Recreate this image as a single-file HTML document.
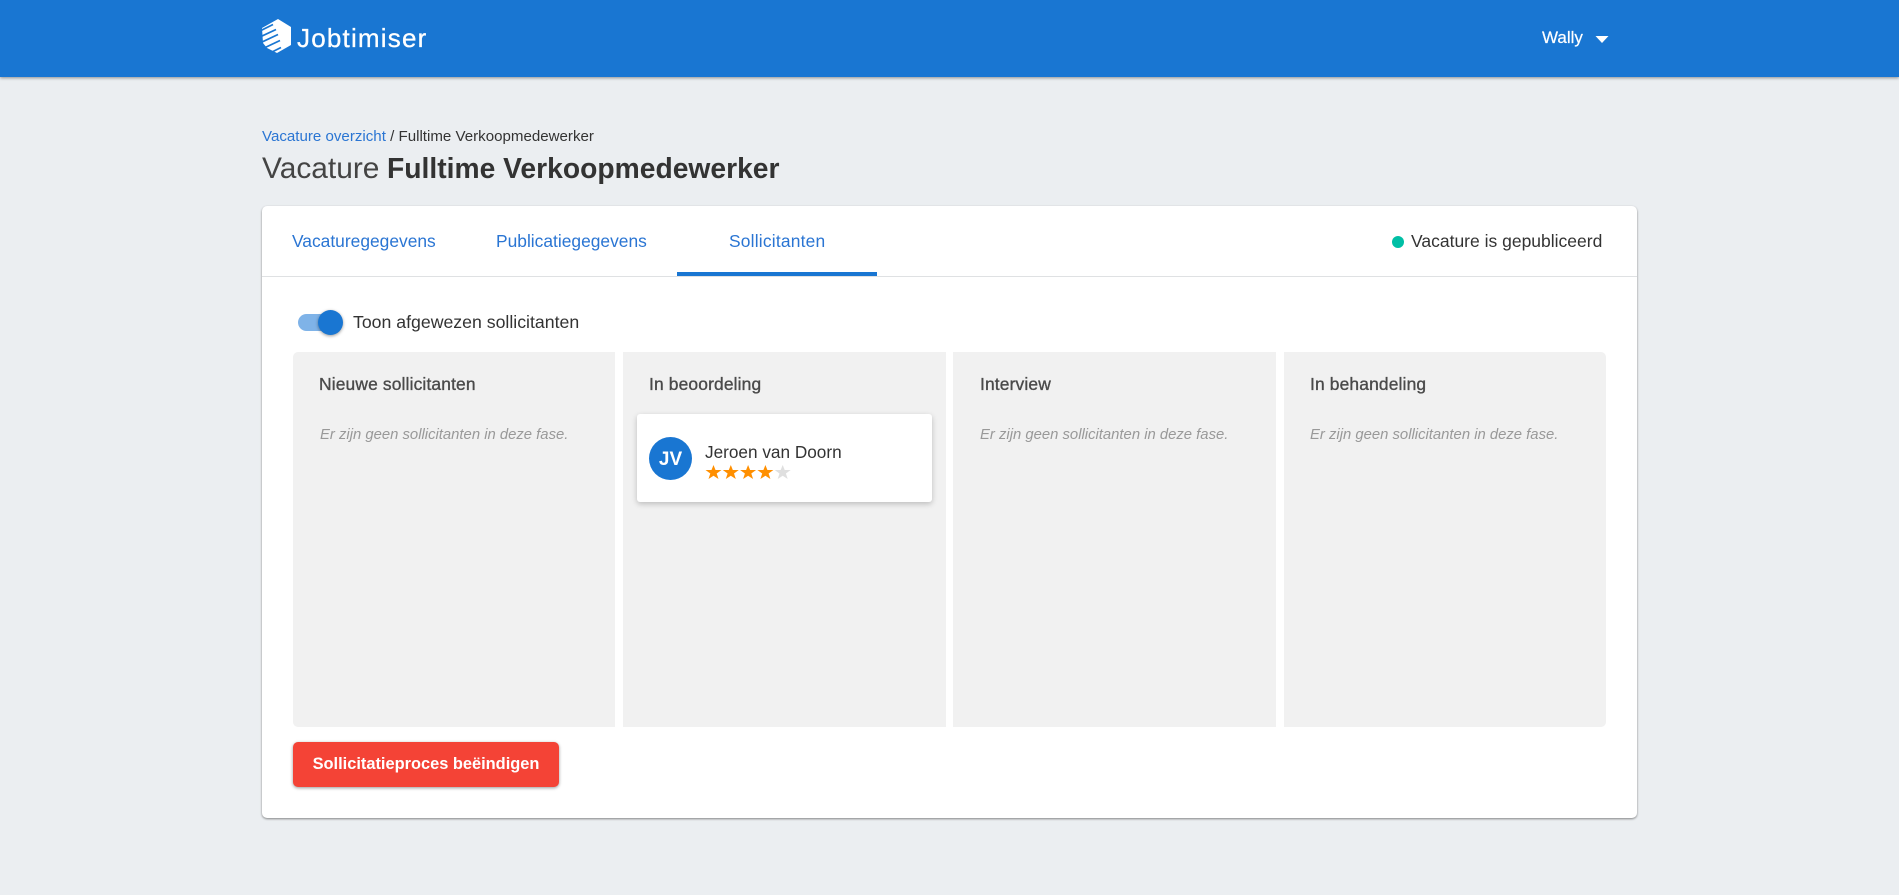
<!DOCTYPE html>
<html lang="nl">
<head>
<meta charset="utf-8">
<title>Jobtimiser</title>
<style>
html,body{margin:0;padding:0;width:1899px;height:895px;overflow:hidden;background:#ebeef1;font-family:"Liberation Sans",Arial,sans-serif;color:#333;}
.a{position:absolute;white-space:nowrap;}
#hdr{position:absolute;left:0;top:0;width:1899px;height:77px;background:#1976d2;box-shadow:0 1px 3px rgba(0,0,0,.4);}
#card{position:absolute;left:262px;top:206px;width:1375px;height:612px;background:#fff;border-radius:5px;box-shadow:0 1px 2px rgba(0,0,0,.45);}
.col{position:absolute;top:352px;height:375px;background:#f1f1f1;}
.h{font-size:17.4px;letter-spacing:.15px;font-weight:normal;color:#4a4a4a;-webkit-text-stroke:.35px #4a4a4a;top:374px;line-height:20px;}
.e{font-size:14.85px;font-style:italic;color:#999;top:425px;line-height:20px;}
.tab{font-size:17.4px;color:#2a75d3;top:231px;line-height:20px;}
</style>
</head>
<body>
<div id="hdr"></div>
<svg class="a" style="left:260px;top:17px" width="34" height="38" viewBox="0 0 34 38">
<path fill="#fff" d="M18 2L31 10V28L17 36L7 31L3 26L2 11Z"/>
<path stroke="#1976d2" stroke-width="1.7" fill="none" d="M0 14L13 7.5M0 20L16 12.5M0 26L18 17.5M2 32L20 23.5M8 37L21 30.5"/>
</svg>
<div class="a" style="left:297px;top:23px;font-size:26px;line-height:30px;color:#fff;letter-spacing:1.2px;-webkit-text-stroke:.3px #fff" id="logo">Jobtimiser</div>
<div class="a" style="left:1542px;top:28px;font-size:17px;line-height:20px;color:#fff;-webkit-text-stroke:.2px #fff">Wally</div>
<svg class="a" style="left:1595px;top:36px" width="14" height="7" viewBox="0 0 14 7"><path fill="#fff" d="M0.5 0H13.5L7 7Z"/></svg>

<div class="a" style="left:262px;top:127px;font-size:15.1px;line-height:20px;color:#333"><span style="color:#2a75d3">Vacature overzicht</span> / Fulltime Verkoopmedewerker</div>
<div class="a" style="left:262px;top:150px;font-size:29.9px;line-height:38px;color:#444">Vacature</div>
<div class="a" style="left:387px;top:149px;font-size:28.25px;line-height:38px;color:#333;font-weight:bold">Fulltime Verkoopmedewerker</div>

<div id="card"></div>
<div class="a" style="left:262px;top:276px;width:1375px;height:1px;background:#dfe1e3"></div>
<div class="a tab" style="left:292px">Vacaturegegevens</div>
<div class="a tab" style="left:496px">Publicatiegegevens</div>
<div class="a tab" style="left:729px;letter-spacing:.2px">Sollicitanten</div>
<div class="a" style="left:677px;top:272px;width:200px;height:4px;background:#1976d2"></div>
<div class="a" style="left:1392px;top:236px;width:12px;height:12px;border-radius:50%;background:#00bfa5"></div>
<div class="a" style="left:1411px;top:231px;font-size:17.5px;line-height:20px;color:#333">Vacature is gepubliceerd</div>

<div class="a" style="left:298px;top:314px;width:34px;height:17px;border-radius:9px;background:#7fb3e8"></div>
<div class="a" style="left:318px;top:310px;width:25px;height:25px;border-radius:50%;background:#1976d2;box-shadow:0 1px 3px rgba(0,0,0,.4)"></div>
<div class="a" style="left:353px;top:312px;font-size:17.7px;line-height:20px;color:#333">Toon afgewezen sollicitanten</div>

<div class="col" style="left:293px;width:322px;border-radius:5px 0 0 5px"></div>
<div class="col" style="left:623px;width:323px"></div>
<div class="col" style="left:953px;width:323px"></div>
<div class="col" style="left:1284px;width:322px;border-radius:0 5px 5px 0"></div>

<div class="a h" style="left:319px">Nieuwe sollicitanten</div>
<div class="a h" style="left:649px">In beoordeling</div>
<div class="a h" style="left:980px">Interview</div>
<div class="a h" style="left:1310px">In behandeling</div>
<div class="a e" style="left:320px">Er zijn geen sollicitanten in deze fase.</div>
<div class="a e" style="left:980px">Er zijn geen sollicitanten in deze fase.</div>
<div class="a e" style="left:1310px">Er zijn geen sollicitanten in deze fase.</div>

<div class="a" style="left:637px;top:414px;width:295px;height:88px;background:#fff;border-radius:3px;box-shadow:0 2px 6px rgba(0,0,0,.22)"></div>
<div class="a" style="left:649px;top:437px;width:43px;height:43px;border-radius:50%;background:#1976d2;color:#fff;font-size:19px;font-weight:bold;line-height:45px;text-align:center">JV</div>
<div class="a" style="left:705px;top:442px;font-size:17.2px;line-height:20px;color:#333">Jeroen van Doorn</div>
<svg class="a" style="left:705px;top:464px" width="88" height="18" viewBox="0 0 88 18">
<path fill="#ff8f00" d="M8 0L10 5H16L11.2 8.5L13 14L8 10.7L3 14L4.8 8.5L0 5H6Z" transform="translate(.5,1)"/>
<path fill="#ff8f00" d="M8 0L10 5H16L11.2 8.5L13 14L8 10.7L3 14L4.8 8.5L0 5H6Z" transform="translate(17.8,1)"/>
<path fill="#ff8f00" d="M8 0L10 5H16L11.2 8.5L13 14L8 10.7L3 14L4.8 8.5L0 5H6Z" transform="translate(35.1,1)"/>
<path fill="#ff8f00" d="M8 0L10 5H16L11.2 8.5L13 14L8 10.7L3 14L4.8 8.5L0 5H6Z" transform="translate(52.4,1)"/>
<path fill="#dfdfdf" d="M8 0L10 5H16L11.2 8.5L13 14L8 10.7L3 14L4.8 8.5L0 5H6Z" transform="translate(69.7,1)"/>
</svg>

<div class="a" style="left:293px;top:742px;width:266px;height:45px;border-radius:5px;background:#f44336;box-shadow:0 1px 3px rgba(0,0,0,.4);color:#fff;font-size:16.4px;font-weight:bold;line-height:45px;text-align:center">Sollicitatieproces beëindigen</div>
</body>
</html>
